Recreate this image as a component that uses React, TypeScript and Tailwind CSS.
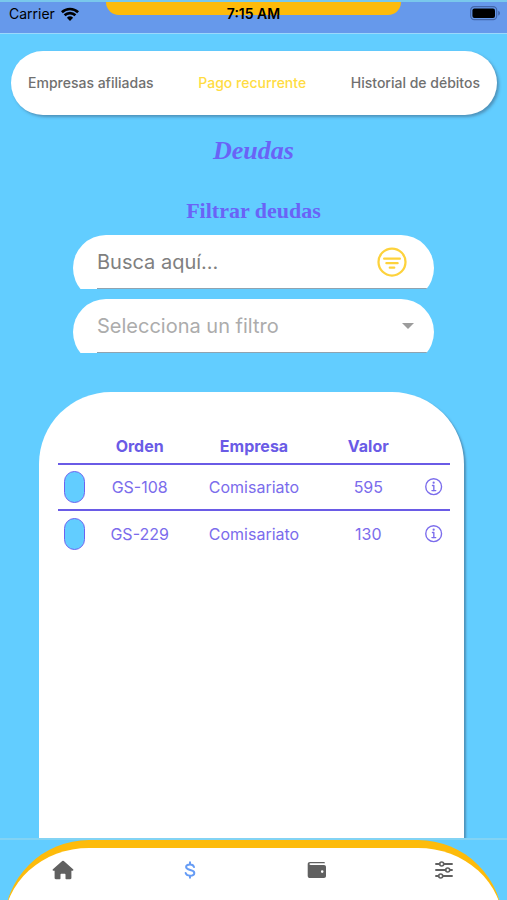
import React from 'react';
import { IoFilterCircleOutline, IoInformationCircleOutline } from 'react-icons/io5';

const tabs = [
  { id: 'empresas', label: 'Empresas afiliadas' },
  { id: 'pago', label: 'Pago recurrente' },
  { id: 'historial', label: 'Historial de débitos' },
];

const deudas = [
  { orden: 'GS-108', empresa: 'Comisariato', valor: 595 },
  { orden: 'GS-229', empresa: 'Comisariato', valor: 130 },
];

function WifiIcon() {
  return (
    <svg viewBox="0 0 20 15" className="w-5 h-4" aria-hidden="true">
      <path d="M10 14.4 6.9 11.2a4.5 4.5 0 0 1 6.2 0z" />
      <path d="M4.6 8.8a7.7 7.7 0 0 1 10.8 0M1.9 5.8a11.6 11.6 0 0 1 16.2 0" fill="none" stroke="currentColor" strokeWidth="2.6" />
    </svg>
  );
}

function BatteryIcon() {
  return (
    <svg viewBox="0 0 31 15" className="w-[31px] h-[15px]" aria-hidden="true">
      <rect x="0.7" y="0.7" width="26" height="13" rx="3.6" fill="none" stroke="#4467ab" strokeWidth="1.2" />
      <rect x="2.4" y="2.4" width="22.6" height="9.6" rx="2" />
      <path d="M28.2 4.8c2.4.8 2.4 4 0 4.8z" fill="#4467ab" />
    </svg>
  );
}

function HomeIcon() {
  return (
    <svg viewBox="0 0 22 20" className="w-[22px] h-5" fill="currentColor" aria-hidden="true">
      <path d="M10.2 1.1a1.2 1.2 0 0 1 1.6 0l9.3 8.2c.6.6.3 1.5-.5 1.5h-1.2v7.3c0 .7-.5 1.1-1.2 1.1h-4c-.4 0-.7-.3-.7-.7v-3.8c0-.6-.4-1-1-1h-3c-.6 0-1 .4-1 1v3.800c0 .4-.3.7-.7.7h-4c-.7 0-1.200-.4-1.200-1.100v-7.300H1.400c-.8 0-1.100-.9-.5-1.500z" />
    </svg>
  );
}

function DollarIcon() {
  return (
    <svg viewBox="0 0 12 18" className="w-3 h-[18px]" fill="none" stroke="currentColor" strokeWidth="2" strokeLinecap="round" aria-hidden="true">
      <path d="M10 6.1C9.6 4.300 8.200 3.400 6 3.400c-2.300 0-3.900 1-3.900 2.700C2.100 10 10.300 8 10.300 11.900c0 1.700-1.700 2.800-4.200 2.800-2.500 0-4.100-1-4.500-2.800M6 1.200v2M6 15v1.800" />
    </svg>
  );
}

function WalletIcon() {
  return (
    <svg viewBox="0 0 20 18" className="w-5 h-[18px]" aria-hidden="true">
      <path
        fill="currentColor"
        fillRule="evenodd"
        d="M3 1h13.5c.9 0 1.5.5 1.5 1.2H3.6c-.7 0-1.2.4-1.2.9s.5.9 1.2.9H17c1.200 0 2 .8 2 2v9c0 1.200-.8 2-2 2H3c-1.400 0-2.300-.9-2.300-2.300V3.300C.7 1.900 1.600 1 3 1zM15.200 9.300a1.300 1.300 0 1 0 0 2.600 1.300 1.300 0 0 0 0-2.600z"
      />
    </svg>
  );
}

function OptionsIcon() {
  return (
    <svg viewBox="0 0 20 18" className="w-5 h-[18px]" fill="none" stroke="currentColor" strokeWidth="1.9" strokeLinecap="round" aria-hidden="true">
      <path d="M2 3h3.5M10 3h8M2 9h9.5M16 9h2M2 15h2.5M9 15h9" />
      <circle cx="7.7" cy="3" r="2" strokeWidth="1.6" />
      <circle cx="13.7" cy="9" r="2" strokeWidth="1.6" />
      <circle cx="6.7" cy="15" r="2" strokeWidth="1.6" />
    </svg>
  );
}

export default function App() {
  return (
    <div className="min-h-screen flex flex-col bg-[#62cdff] font-['Inter',sans-serif]">
      <header className="h-[34px] border-y border-t-2 border-t-[#79c8ec] border-b-[#9bd8fb] bg-[#6699eb] relative">
        <div className="w-[58%] h-[13px] mx-auto rounded-b-[14px] bg-[#fdbb0b]" />
        <div className="absolute inset-0 flex items-center justify-between pl-[9px] pr-[6px] pb-2 text-sm text-black">
          <div className="flex items-center gap-[5px]">
            <span>Carrier</span>
            <WifiIcon />
          </div>
          <BatteryIcon />
        </div>
        <span className="absolute inset-x-0 top-[2px] text-center text-sm leading-5 font-semibold text-black">7:15 AM</span>
      </header>

      <main className="flex-1 flex flex-col">
        <nav className="mt-[17px] ml-[11px] mr-[10px] h-16 px-[17px] flex items-center justify-between rounded-full bg-white shadow-[2px_2px_3px_rgba(60,90,120,0.5)]">
          {tabs.map((tab) => (
            <a
              href={`#${tab.id}`}
              key={tab.id}
              className={`text-sm font-medium ${tab.id === 'pago' ? 'text-[#ffdc42]' : 'text-[#707070]'}`}
            >
              {tab.label}
            </a>
          ))}
        </nav>

        <h1 className="mt-5 text-center font-['Liberation_Serif',serif] text-[26px] leading-8 font-bold italic text-[#6a63f6]">
          Deudas
        </h1>
        <h2 id="filtrar" className="mt-[30px] text-center font-['Liberation_Serif',serif] text-[22px] leading-7 font-bold text-[#6a63f6]">
          Filtrar deudas
        </h2>

        <div className="mt-[10px] mx-[73px] flex flex-col gap-[10px]">
          <div className="h-[54px] overflow-hidden">
            <div className="h-[66px] overflow-hidden rounded-full bg-white pl-6">
              <div className="h-[54px] flex items-center border-b border-[#8fa3b0] pr-6">
                <input
                  type="text"
                  aria-labelledby="filtrar"
                  placeholder="Busca aquí..."
                  className="flex-1 min-w-0 text-xl bg-transparent outline-none placeholder:text-[#808080]"
                />
                <button type="button" aria-label="Filtrar" className="text-[#fdd23c]">
                  <IoFilterCircleOutline className="size-9" />
                </button>
              </div>
            </div>
          </div>
          <div className="h-[54px] overflow-hidden">
            <div className="h-[66px] overflow-hidden rounded-full bg-white pl-6">
              <div className="h-[54px] flex items-center border-b border-[#8fa3b0] pr-5">
                <select
                  aria-labelledby="filtrar"
                  defaultValue=""
                  className="flex-1 min-w-0 appearance-none text-xl bg-transparent outline-none text-[#acacac]"
                >
                  <option value="">Selecciona un filtro</option>
                </select>
                <svg viewBox="0 0 12 6" className="w-3 h-[6px] fill-[#9c9c9c]" aria-hidden="true">
                  <path d="M0 0h12L6 6z" />
                </svg>
              </div>
            </div>
          </div>
        </div>

        <section className="mt-[39px] ml-[39px] mr-[43px] flex-1 rounded-t-[72px] bg-white pt-9 pl-[19px] pr-[14px] shadow-[2px_2px_2px_rgba(60,90,120,0.5)]">
          <table className="w-full table-fixed text-center text-base text-[#7b6cec]">
            <thead>
              <tr className="h-9 font-semibold text-[#6a5be6]">
                <th className="w-1/12" />
                <th className="w-3/12">Orden</th>
                <th className="w-4/12">Empresa</th>
                <th className="w-3/12">Valor</th>
                <th className="w-1/12" />
              </tr>
            </thead>
            <tbody>
              {deudas.map((deuda) => (
                <tr key={deuda.orden} className="h-[46px] border-t-2 border-[#6a5be6]">
                  <td>
                    <input
                      type="checkbox"
                      aria-label={deuda.orden}
                      className="block mx-auto appearance-none w-[21px] h-8 rounded-full border border-[#6c63f0] bg-[#62cdff]"
                    />
                  </td>
                  <td>{deuda.orden}</td>
                  <td>{deuda.empresa}</td>
                  <td>{deuda.valor}</td>
                  <td>
                    <button type="button" aria-label="Detalle" className="block mx-auto">
                      <IoInformationCircleOutline className="size-[22px]" />
                    </button>
                  </td>
                </tr>
              ))}
            </tbody>
          </table>
        </section>
      </main>

      <footer className="h-[62px] overflow-hidden border-t-2 border-[#82d3f4] bg-[#62cdff]">
        <div className="mx-1 h-24 rounded-t-[85px] border-t-8 border-[#fdbb0b] bg-white">
          <nav className="-mx-1 h-11 grid grid-cols-4 place-items-center text-[#606060]">
            <a href="#inicio" aria-label="Inicio">
              <HomeIcon />
            </a>
            <a href="#pagos" aria-label="Pagos" className="text-[#669cf5]">
              <DollarIcon />
            </a>
            <a href="#billetera" aria-label="Billetera">
              <WalletIcon />
            </a>
            <a href="#opciones" aria-label="Opciones">
              <OptionsIcon />
            </a>
          </nav>
        </div>
      </footer>
    </div>
  );
}
